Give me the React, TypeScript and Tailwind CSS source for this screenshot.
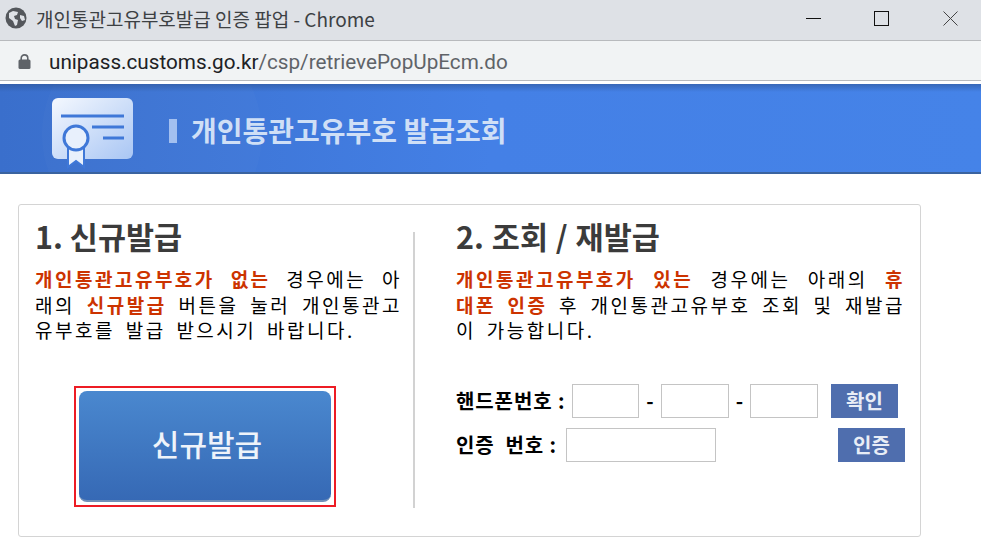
import React from 'react';

const font = { fontFamily: '"Noto Sans CJK KR", "Liberation Sans", sans-serif' };
const line = 'block whitespace-nowrap [text-align-last:justify] text-justify';
const para = 'mt-[10px] text-[19px] leading-[25.5px] tracking-[2.5px] [word-spacing:4px] text-black';

function CertIcon() {
  return (
    <svg width="86" height="74" viewBox="0 0 86 74" className="shrink-0 mt-[11px]">
      <defs>
        <linearGradient id="card" x1="0" y1="0" x2="1" y2="1">
          <stop offset="0" stopColor="#f4f8fe" />
          <stop offset="1" stopColor="#a9c6f4" />
        </linearGradient>
      </defs>
      <rect x="1" y="1" width="81" height="61" rx="6" fill="url(#card)" />
      <path d="M10 19H73" stroke="#3f78d8" strokeWidth="3" />
      <path d="M41 30H73M52 41H73" stroke="#3f78d8" strokeWidth="3" />
      <path d="M17 44V70L25 64L33 70V44Z" fill="#e8f0fc" stroke="#3f78d8" strokeWidth="2" />
      <circle cx="25" cy="41" r="12" fill="#e8f0fc" stroke="#3f78d8" strokeWidth="3" />
    </svg>
  );
}

export default function App() {
  return (
    <div className="w-[981px] h-[545px] overflow-hidden bg-white flex flex-col" style={font}>
      <div className="h-[40px] bg-[#dee1e6] flex items-center pl-[5px] text-[#3c4043]">
        <svg width="22" height="22" viewBox="0 0 22 22" className="shrink-0 mb-[5px]">
          <circle cx="11" cy="11" r="10.5" fill="#54575c" />
          <path d="M4 6l4-2 5 1-1 3-3 1 1 3 3 1-1 5-2 1-2-5-4-3zM15 8l4 1 1 4-3 1-2-3z" fill="#dee1e6" />
        </svg>
        <span className="ml-[9px] mb-[3px] text-[19px] leading-none">개인통관고유부호발급 인증 팝업 - Chrome</span>
        <div className="ml-auto flex items-center mb-[4px]">
          <svg width="15" height="15" viewBox="0 0 15 15" className="mr-[53px]"><path d="M0 7.5H15" stroke="#111" /></svg>
          <svg width="15" height="15" viewBox="0 0 15 15" className="mr-[54px]"><rect x="0.5" y="0.5" width="14" height="14" fill="none" stroke="#111" /></svg>
          <svg width="15" height="15" viewBox="0 0 15 15" className="mr-[23px]"><path d="M0.5 0.5L14.5 14.5M14.5 0.5L0.5 14.5" stroke="#444" /></svg>
        </div>
      </div>
      <div className="h-[41px] bg-[#f1f3f4] border-y border-[#b8babd] flex items-center pl-[18px]">
        <svg width="13" height="15" viewBox="0 0 13 15" className="shrink-0 mt-[2px]">
          <path d="M3.2 6V4.2a3.3 3.3 0 0 1 6.6 0V6" fill="none" stroke="#5f6368" strokeWidth="1.6" />
          <rect x="0.5" y="5.5" width="12" height="9.5" rx="1.5" fill="#5f6368" />
        </svg>
        <span className="ml-[18px] mt-[3px] text-[20.7px] leading-none text-[#5f6368]" style={{ fontFamily: 'Roboto, "Liberation Sans", sans-serif' }}>
          <span className="text-[#202124]">unipass.customs.go.kr</span>/csp/retrievePopUpEcm.do
        </span>
      </div>
      <div className="relative overflow-hidden mt-[3px] h-[90px] bg-gradient-to-r from-[#3a6fcc] via-[#4480e6] to-[#4583e8] border-b-2 border-[#3a639f] flex items-center pl-[51px]">
        <div className="absolute left-[42px] top-[-60px] w-[220px] h-[220px] rounded-full bg-white/[0.02]" />
        <div className="absolute inset-x-0 top-0 h-[8px] bg-gradient-to-b from-[#2f5596]/60 to-transparent" />
        <div className="relative flex items-center">
          <CertIcon />
          <div className="ml-[32px] mt-[5px] w-[8px] h-[24px] bg-[#a3c0f0]" />
          <span className="ml-[14px] mt-[3px] text-[28px] leading-none font-bold text-[#cfdff6]">개인통관고유부호 발급조회</span>
        </div>
      </div>
      <div className="mt-[30px] ml-[18px] w-[903px] h-[333px] border border-[#d4d4d4] rounded-[3px] flex pt-[11px] pb-[28px]">
        <div className="w-[395px] pl-[16px] pr-[11px] flex flex-col">
          <h2 className="text-[30.5px] leading-[40px] font-bold text-[#3b3b3b]">1. 신규발급</h2>
          <p className={para}>
            <span className={line}><b className="text-[#cc3300]">개인통관고유부호가 없는</b> 경우에는 아</span>
            <span className={line}>래의 <b className="text-[#cc3300]">신규발급</b> 버튼을 눌러 개인통관고</span>
            <span className="block whitespace-nowrap">유부호를 발급 받으시기 바랍니다.</span>
          </p>
          <div className="mt-[43px] ml-[39px] w-[262px] h-[121px] border-2 border-[#ed1c24] p-[3px]">
            <button className="w-full h-full pl-[4px] pb-[4px] rounded-[8px] bg-gradient-to-b from-[#4a88cf] to-[#3669b5] border-b-2 border-[#6f8fb8] text-[#eef3fa] text-[30px] font-medium">신규발급</button>
          </div>
        </div>
        <div className="mt-[16px] w-[2px] bg-[#d2d2d2]" />
        <div className="flex-1 pl-[41px] pr-[15px] flex flex-col">
          <h2 className="text-[30.5px] leading-[40px] font-bold text-[#3b3b3b] [word-spacing:1px]">2. 조회 / 재발급</h2>
          <p className={para}>
            <span className={line}><b className="text-[#cc3300]">개인통관고유부호가 있는</b> 경우에는 아래의 <b className="text-[#cc3300]">휴</b></span>
            <span className={line}><b className="text-[#cc3300]">대폰 인증</b> 후 개인통관고유부호 조회 및 재발급</span>
            <span className="block whitespace-nowrap">이 가능합니다.</span>
          </p>
          <div className="mt-[41px] flex items-center h-[34px] text-[20px] font-bold text-black">
            <span className="w-[116px] whitespace-nowrap tracking-[0.9px]">핸드폰번호 :</span>
            <input className="w-[67px] h-[34px] border border-[#c4c4c4]" />
            <span className="w-[22px] text-center">-</span>
            <input className="w-[68px] h-[34px] border border-[#c4c4c4]" />
            <span className="w-[21px] text-center">-</span>
            <input className="w-[68px] h-[34px] border border-[#c4c4c4]" />
            <button className="ml-[13px] w-[67px] h-[34px] bg-[#4f6eae] text-[#e8edf6] text-[20px] font-bold">확인</button>
          </div>
          <div className="mt-[10px] flex items-center h-[34px] text-[20px] font-bold text-black">
            <span className="w-[110px] whitespace-pre tracking-[0.9px]">인증  번호 :</span>
            <input className="w-[150px] h-[34px] border border-[#c4c4c4]" />
            <button className="ml-[122px] w-[67px] h-[34px] bg-[#4f6eae] text-[#e8edf6] text-[20px] font-bold">인증</button>
          </div>
        </div>
      </div>
    </div>
  );
}
